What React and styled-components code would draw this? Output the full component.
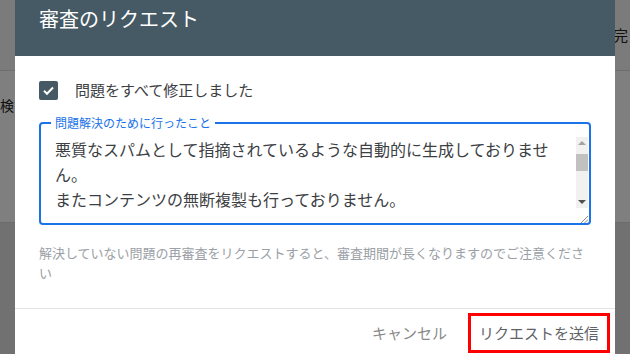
import React from 'react';
import styled, { createGlobalStyle } from 'styled-components';

const Global = createGlobalStyle`
  html, body {
    margin: 0;
    padding: 0;
    width: 630px;
    height: 354px;
    overflow: hidden;
  }
  body {
    font-family: "Noto Sans CJK JP", "Noto Sans", sans-serif;
    background: #ffffff;
  }
  * { box-sizing: border-box; }
`;

const Stage = styled.div`
  position: relative;
  width: 630px;
  height: 354px;
  overflow: hidden;
`;

/* ---------- background page ---------- */
const Page = styled.div`
  display: flex;
  flex-direction: column;
  height: 100%;
`;

const PageBar = styled.header`
  height: 71px;
  flex: none;
  background: #f7f7f7;
  border-bottom: 1px solid #dadada;
  display: flex;
  align-items: center;
  padding: 0 0 2px 613px;
  font-size: 15px;
  color: #222;
  white-space: nowrap;
`;

const PageSection = styled.section`
  height: 152px;
  flex: none;
  background: #ffffff;
  border-bottom: 1px solid #d6d6d6;
  display: flex;
  align-items: flex-start;
  padding-top: 24px;
  font-size: 14px;
  color: #222;
  white-space: nowrap;
`;

const PageText = styled.span`
  line-height: 20px;
`;

const PageLower = styled.section`
  flex: 1;
  background: #e2e2e2;
`;

/* ---------- modal ---------- */
const Overlay = styled.div`
  position: absolute;
  inset: 0;
  background: rgba(0, 0, 0, 0.5);
  display: flex;
  align-items: flex-start;
  padding-left: 15px;
`;

const Dialog = styled.div`
  width: 600px;
  height: 380px;
  background: #ffffff;
  display: flex;
  flex-direction: column;
`;

const Header = styled.div`
  height: 56px;
  flex: none;
  background: #455a64;
  padding: 7px 24px 0 24px;
`;

const Title = styled.h2`
  margin: 0;
  font-size: 20px;
  line-height: 24px;
  font-weight: 400;
  color: #ffffff;
`;

const Body = styled.div`
  padding: 24px 24px 25px 24px;
  display: flex;
  flex-direction: column;
`;

const CheckRow = styled.label`
  display: flex;
  align-items: center;
  gap: 17px;
  height: 20px;
`;

const CheckBox = styled.span`
  width: 19px;
  height: 19px;
  border-radius: 2px;
  background: #455a64;
  display: flex;
  align-items: center;
  justify-content: center;
  flex: none;
`;

const CheckLabel = styled.span`
  font-size: 15px;
  line-height: 20px;
  color: #3c4043;
`;

const Field = styled.fieldset`
  position: relative;
  margin: 15px 0 0 0;
  padding: 0;
  min-inline-size: 0;
  border: 2px solid #1a73e8;
  border-radius: 4px;
`;

const Legend = styled.legend`
  margin-left: 10px;
  padding: 0 4px;
  font-size: 12px;
  line-height: 16px;
  color: #1a73e8;
`;

const FieldBody = styled.div`
  display: flex;
  align-items: stretch;
  padding: 6px 1px 15px 14px;
`;

const TextArea = styled.textarea`
  flex: 1;
  height: 71px;
  margin: 0;
  padding: 0;
  border: none;
  outline: none;
  resize: none;
  overflow: hidden;
  background: transparent;
  font-family: "Noto Sans CJK JP", "Noto Sans", sans-serif;
  font-size: 16px;
  line-height: 25px;
  color: #3c4043;
`;

const ScrollBar = styled.div`
  width: 12px;
  flex: none;
  background: #f1f1f1;
  display: flex;
  flex-direction: column;
  align-items: center;
`;

const ScrollButton = styled.div`
  width: 12px;
  height: 12px;
  flex: none;
  display: flex;
  align-items: center;
  justify-content: center;
`;

const Arrow = styled.span`
  width: 0;
  height: 0;
  border-left: 4px solid transparent;
  border-right: 4px solid transparent;
  ${(p) =>
    p.$dir === 'up'
      ? `border-bottom: 4px solid ${p.$color};`
      : `border-top: 4px solid ${p.$color};`}
`;

const Thumb = styled.div`
  width: 12px;
  height: 17px;
  margin-top: 5px;
  background: #c1c1c1;
  flex: none;
`;

const ScrollSpacer = styled.div`
  flex: 1;
`;

const Grip = styled.svg`
  position: absolute;
  right: 1px;
  bottom: 0;
  width: 8px;
  height: 8px;
`;

const Help = styled.p`
  margin: 18px 0 0 0;
  font-size: 13px;
  line-height: 20px;
  color: #9aa0a6;
`;

const Footer = styled.div`
  border-top: 1px solid #e3e3e3;
  display: flex;
  justify-content: flex-end;
  align-items: center;
  gap: 10px;
  padding: 4px 5px 0 0;
`;

const Button = styled.button`
  height: 40px;
  padding: 0 8px;
  margin: 0;
  background: transparent;
  border: ${(p) => (p.$highlight ? '3px solid #ff0000' : '3px solid transparent')};
  font-family: "Noto Sans CJK JP", "Noto Sans", sans-serif;
  font-size: 15px;
  line-height: 20px;
  color: ${(p) => (p.$primary ? '#5f6368' : '#8a8a8a')};
  cursor: pointer;
`;

const text =
  '悪質なスパムとして指摘されているような自動的に生成しておりません。\nまたコンテンツの無断複製も行っておりません。\n\n';

export default function App() {
  return (
    <Stage>
      <Global />
      <Page>
        <PageBar>完</PageBar>
        <PageSection>
          <PageText>検</PageText>
        </PageSection>
        <PageLower />
      </Page>
      <Overlay>
        <Dialog role="dialog">
          <Header>
            <Title>審査のリクエスト</Title>
          </Header>
          <Body>
            <CheckRow>
              <CheckBox>
                <svg width="13" height="13" viewBox="0 0 13 13">
                  <path d="M2 6.8l3 3 6-6.3" fill="none" stroke="#fff" strokeWidth="2" />
                </svg>
              </CheckBox>
              <CheckLabel>問題をすべて修正しました</CheckLabel>
            </CheckRow>
            <Field>
              <Legend>問題解決のために行ったこと</Legend>
              <FieldBody>
                <TextArea defaultValue={text} />
                <ScrollBar>
                  <ScrollButton>
                    <Arrow $dir="up" $color="#a3a3a3" />
                  </ScrollButton>
                  <Thumb />
                  <ScrollSpacer />
                  <ScrollButton>
                    <Arrow $dir="down" $color="#505050" />
                  </ScrollButton>
                </ScrollBar>
              </FieldBody>
              <Grip viewBox="0 0 8 8">
                <path d="M1 8L8 1M4.5 8L8 4.5" stroke="#8a8a8a" strokeWidth="1" />
              </Grip>
            </Field>
            <Help>
              解決していない問題の再審査をリクエストすると、審査期間が長くなりますのでご注意ください
            </Help>
          </Body>
          <Footer>
            <Button>キャンセル</Button>
            <Button $primary $highlight>
              リクエストを送信
            </Button>
          </Footer>
        </Dialog>
      </Overlay>
    </Stage>
  );
}
